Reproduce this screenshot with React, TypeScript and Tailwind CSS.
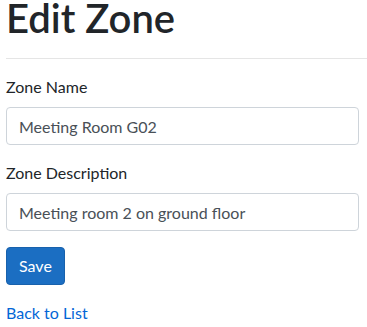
export default function App() {
  return (
    <div className="bg-white text-[#212529] text-[16px] leading-[24px]" style={{ fontFamily: "Lato, 'Segoe UI', sans-serif" }}>
      <div className="pl-[6px]">
        <h1 className="text-[40px] leading-[36px] font-semibold mb-[22px]">Edit Zone</h1>
        <hr className="border-0 border-t border-[#e5e5e5] m-0" />
        <div className="w-[353px] mt-[16px]">
          <div className="mb-[16px]">
            <label className="block mb-[8px]">Zone Name</label>
            <input
              className="block w-full h-[38px] px-[12px] border border-[#ced4da] rounded-[4px] text-[#495057] outline-none"
              defaultValue="Meeting Room G02"
            />
          </div>
          <div className="mb-[16px]">
            <label className="block mb-[8px]">Zone Description</label>
            <input
              className="block w-full h-[38px] px-[12px] border border-[#ced4da] rounded-[4px] text-[#495057] outline-none"
              defaultValue="Meeting room 2 on ground floor"
            />
          </div>
          <div className="mb-[16px]">
            <button className="h-[38px] px-[12px] rounded-[4px] bg-[#1b6ec2] border border-[#1861ac] text-white">Save</button>
          </div>
        </div>
        <div>
          <a href="#" className="text-[#0366d6]">Back to List</a>
        </div>
      </div>
    </div>
  );
}
